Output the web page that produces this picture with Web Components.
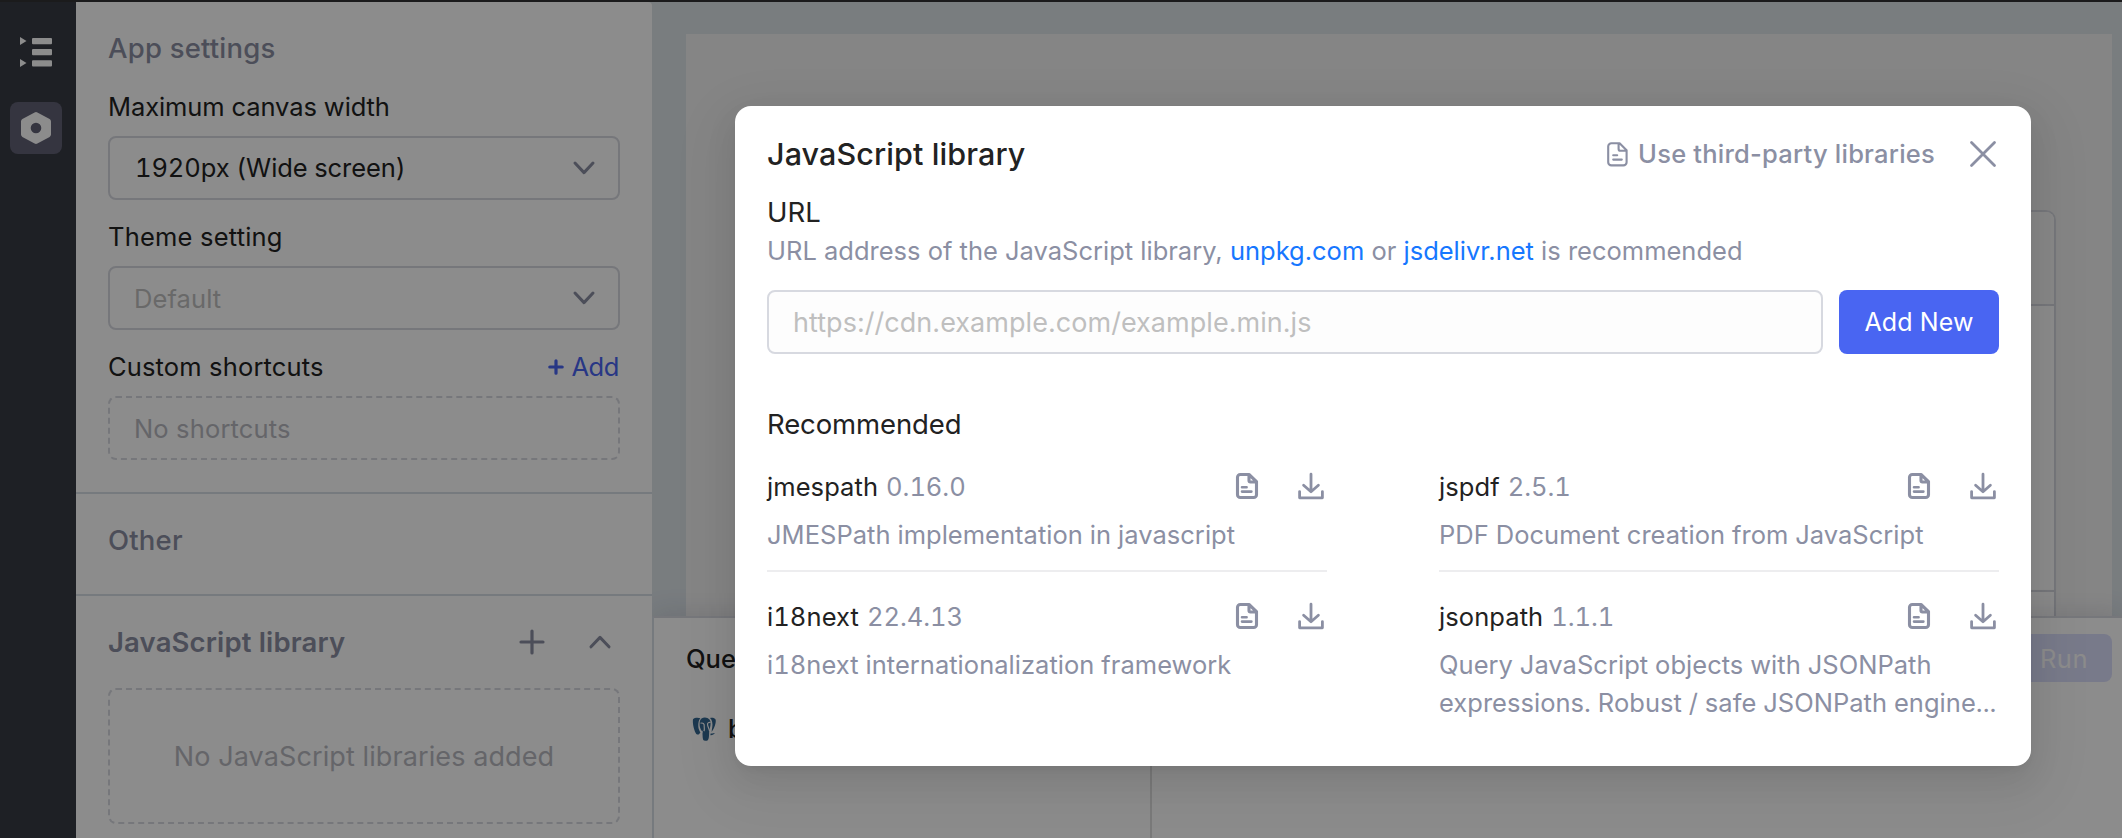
<!DOCTYPE html>
<html lang="en">
<head>
<meta charset="utf-8">
<title>App settings</title>
<style>
html,body{margin:0;height:100%;overflow:hidden}
body{font-family:Inter,"Liberation Sans",sans-serif;font-size:25.5px;color:#222;
--muted:#8b8fa3;--line:#d7d9e0;--blue:#4965f2}
</style>
</head>
<body>
<app-shell></app-shell>
<script>
const define=(name,html,setup)=>customElements.define(name,class extends HTMLElement{
  connectedCallback(){
    if(this.shadowRoot)return;
    const t=document.createElement('template');
    t.innerHTML=html;
    this.attachShadow({mode:'open'}).appendChild(t.content.cloneNode(true));
    if(setup)setup(this,this.shadowRoot);
  }
});

const icons={
  outline:[32,30,'<g fill="#fff"><path d="M0 0l6.500 4L0 8zM0 22l6.500 4L0 30z"/><rect x="12" y="1" width="20" height="6.200" rx="1"/><rect x="12" y="12" width="20" height="6.200" rx="1"/><rect x="12" y="23.200" width="20" height="6.200" rx="1"/></g>'],
  hexagon:[30,32,'<path fill="#fff" fill-rule="evenodd" d="M13.6.4a3 3 0 0 1 2.800 0l12.200 6.700A2.700 2.700 0 0 1 30 9.400v13.200a2.700 2.700 0 0 1-1.400 2.300l-12.200 6.700a3 3 0 0 1-2.800 0L1.400 24.900A2.700 2.700 0 0 1 0 22.600V9.400a2.700 2.700 0 0 1 1.400-2.300zM15 10.700a5.300 5.300 0 1 0 0 10.600 5.300 5.300 0 0 0 0-10.600z"/>'],
  down:[22,14,'<path d="M2 2l9 9.600L20 2" fill="none" stroke="currentColor" stroke-width="3" stroke-linecap="round" stroke-linejoin="round"/>'],
  up:[22,14,'<path d="M2 11.800l9-9.400 9 9.400" fill="none" stroke="currentColor" stroke-width="3" stroke-linecap="round" stroke-linejoin="round"/>'],
  plus:[26,26,'<path d="M13 2v22M2 13h22" stroke="currentColor" stroke-width="3.200" stroke-linecap="round"/>'],
  smallplus:[16,16,'<path d="M8 1.800v12.400M1.800 8h12.400" stroke="currentColor" stroke-width="3.200" stroke-linecap="round"/>'],
  close:[26,26,'<path d="M1.500 1.500l23 23M24.500 1.500l-23 23" stroke="currentColor" stroke-width="2.800" stroke-linecap="round"/>'],
  doclight:[21,25,'<g fill="none" stroke="currentColor" stroke-width="2.100" stroke-linejoin="round" stroke-linecap="round"><path d="M12.600 1.200H4.400a3.200 3.200 0 0 0-3.200 3.200v15.800a3.200 3.200 0 0 0 3.200 3.200h12a3.200 3.200 0 0 0 3.200-3.200V8.200zM11.600 1.400V7a1.800 1.800 0 0 0 1.800 1.800h6"/><path d="M6.200 13.200h4M6.200 17.600h8.600"/></g>'],
  doc:[22,26,'<g fill="none" stroke="currentColor" stroke-width="3.100" stroke-linejoin="round" stroke-linecap="round"><path d="M13 1.500H4.300a2.800 2.800 0 0 0-2.800 2.800v17.400a2.800 2.800 0 0 0 2.800 2.800h13.400a2.800 2.800 0 0 0 2.800-2.800V8.600zM13 2v5.600a1.400 1.400 0 0 0 1.400 1.400h5.600"/><path d="M6 14.200h4.600M6 18.600h9.400" stroke-width="2.600"/></g>'],
  download:[26,27,'<g fill="none" stroke="currentColor" stroke-width="2.800" stroke-linecap="round" stroke-linejoin="round"><path d="M13 1.200v17M5.600 12.200l7.400 6.600 7.400-6.600M1.600 18.600v6.200h22.800v-6.200"/></g>'],
  postgres:[24,24,'<g fill="#336791"><path d="M1 2.200C2.600.6 6.200.5 8.400 1.300 6.600 3.200 6.200 6 6.300 9.300c.1 2.700 1.200 4.700 2.100 6.400-.7 1.600-2.600 2.500-4.100 1.300C2.400 14.500.2 6 1 2.200z"/><path d="M9.500 1.500C12-.2 15.600.3 17.500 2.500c1.500 2.200 1.300 5.500.5 8.200-.5 2.200-.9 3.800-.9 5.800-.1 3-.2 5.600-1.300 6.700-1.300 1.100-4 .8-4.700-.8-.7-2-.3-5.200-.9-7.900C8.300 12.300 7.500 9.500 7.600 7c0-2.300.5-4.300 1.900-5.500z"/><path d="M18 1.100c2.100-.6 4.700-.2 5.600 1.500.8 3-1.200 9-4 12.400.2-3.100 1.500-6.700.5-10.200C19.700 3.200 19 2 18 1.100z"/><path d="M18.600 16.400c1.500.1 2.900.1 4.200-.3-.8 1.500-2.700 2.300-4.400 2.100z"/></g><path d="M8.500 6.300c2.300-.8 4 .2 3.700 2.500-.1 2 .7 3.500-.3 5.300M7.500 17c2 0 2.900-1.300 2.500-3.100M18.500 5.500c-2-.3-3.300.5-2.900 2.500.3 2 1.500 3.500 2 6.200" fill="none" stroke="#fff" stroke-width="1.200"/>']
};
define('ui-icon','<style>:host{display:block;flex:none;line-height:0}svg{display:block;overflow:visible}</style>',(el,root)=>{
  const [w,h,body]=icons[el.getAttribute('name')];
  root.innerHTML+=`<svg width="${w}" height="${h}" viewBox="0 0 ${w} ${h}">${body}</svg>`;
});

define('side-rail',`<style>
:host{display:flex;flex-direction:column;box-sizing:border-box;width:76px;padding-left:10px;flex:none;background:#383b44;align-items:flex-start}
.i{box-sizing:border-box;width:52px;height:52px;border-radius:8px;display:flex;align-items:center;justify-content:center}
.top{margin-top:24px;margin-bottom:24px}
.on{background:#626276}
</style><div class="i top"><ui-icon name="outline"></ui-icon></div><div class="i on"><ui-icon name="hexagon"></ui-icon></div>`);

define('panel-section',`<style>
:host{display:block;padding:28px 32px 0;border-bottom:2px solid #d7dfe5}
:host([last]){border-bottom:0}
header{display:flex;align-items:center;height:36px;line-height:36px;font-size:27.5px;font-weight:500;color:var(--muted);letter-spacing:.2px}
:host([strong]) header{font-weight:600;letter-spacing:.15px}
.t{flex:1}
</style><header><span class="t"><slot name="title"></slot></span><slot name="actions"></slot></header><slot></slot>`);

define('form-field',`<style>
:host{display:block;margin-bottom:17px}
:host([last]){margin-bottom:0}
.label{display:flex;justify-content:space-between;align-items:center;line-height:40px;height:40px;margin-bottom:9px;letter-spacing:var(--ls,0)}
</style><div class="label"><span><slot name="label"></slot></span><slot name="action"></slot></div><slot></slot>`);

define('select-box',`<style>
:host{box-sizing:border-box;height:64px;border:2px solid var(--line);border-radius:8px;display:flex;align-items:center;justify-content:space-between;padding:0 23px 0 25px;letter-spacing:-.1px;font-variant-numeric:tabular-nums}
:host(:not([placeholder])) span{padding-bottom:1px}
:host([placeholder]){color:#bfbfbf;padding-left:24px;letter-spacing:.1px}
ui-icon{color:var(--muted)}
</style><span><slot></slot></span><ui-icon name="down"></ui-icon>`);

define('empty-box',`<style>
:host{box-sizing:border-box;height:64px;border:2px dashed var(--line);border-radius:8px;display:flex;align-items:center;padding:0 24px;color:#b8b9bf;letter-spacing:.15px}
:host([large]){height:136px;justify-content:center;font-size:27px;letter-spacing:.1px}
</style><span><slot></slot></span>`);

define('settings-panel',`<style>
:host{display:block;box-sizing:border-box;width:576px;flex:none;background:#fff;border-radius:0 4px 0 0}
.fields{padding:21px 0 32px}
.add{display:flex;align-items:center;gap:7px;color:var(--blue);letter-spacing:-.4px;margin-right:1px}
.acts{display:flex;align-items:center;gap:44px;margin-right:9px}
.other{padding-bottom:36px}
.lib{padding-top:28px}
</style>
<panel-section><span slot="title">App settings</span><div class="fields">
<form-field style="--ls:-.1px"><span slot="label">Maximum canvas width</span><select-box>1920px (Wide screen)</select-box></form-field>
<form-field style="--ls:.2px"><span slot="label">Theme setting</span><select-box placeholder>Default</select-box></form-field>
<form-field last style="--ls:.15px"><span slot="label">Custom shortcuts</span><span slot="action" class="add"><ui-icon name="smallplus"></ui-icon>Add</span><empty-box>No shortcuts</empty-box></form-field>
</div></panel-section>
<panel-section><span slot="title">Other</span><div class="other"></div></panel-section>
<panel-section strong last><span slot="title">JavaScript library</span><span slot="actions" class="acts"><ui-icon name="plus"></ui-icon><ui-icon name="up"></ui-icon></span><div class="lib"><empty-box large>No JavaScript libraries added</empty-box></div></panel-section>`);

define('app-canvas',`<style>
:host{display:flex;height:614px;box-sizing:border-box;padding:32px 10px 0 34px;background:#dce3e8}
.page{flex:1;background:#f3f3f3;display:flex;padding:176px 56px 0}
.table{flex:1;border:2px solid var(--line);border-bottom:0;border-radius:10px 10px 0 0;background:#fff;display:flex;flex-direction:column}
.head{height:92px;border-bottom:2px solid var(--line);background:#f8f8f8;border-radius:8px 8px 0 0}
.body{flex:1;border-bottom:2px solid var(--line)}
.foot{height:24px}
</style><div class="page"><div class="table"><div class="head"></div><div class="body"></div><div class="foot"></div></div></div>`);

define('query-panel',`<style>
:host{display:flex;flex:1;background:#fff;border-top:2px solid var(--line);border-left:2px solid #d7dfe5;position:relative;box-shadow:0 -4px 24px rgba(40,40,70,.12);font-weight:500}
.list{box-sizing:border-box;width:498px;border-right:2px solid #dedede;padding:22px 32px}
h2{margin:0;font:inherit;line-height:38px}
.q{display:flex;align-items:center;gap:12px;height:52px;margin-top:25px;padding-left:6px}
.q span{padding-bottom:2px}
.main{flex:1;display:flex;justify-content:flex-end;align-items:flex-start;padding:16px 10px}
.run{height:48px;line-height:49px;border-radius:8px;background:#dbdefc;color:#fff;padding:0 24px;font-weight:400;letter-spacing:.5px}
</style><div class="list"><h2>Que</h2><div class="q"><ui-icon name="postgres"></ui-icon><span>b</span></div></div><div class="main"><div class="run">Run</div></div>`);

define('library-item',`<style>
:host{display:block;padding-bottom:16px;border-bottom:2px solid #ededef;font-variant-numeric:tabular-nums}
:host([end]){border:0;padding:26px 0 0}
.row{display:flex;align-items:center;height:38px;line-height:38px;letter-spacing:.08px}
.v{color:var(--muted);margin-left:8px;flex:1;letter-spacing:-.05px}
.ic{display:flex;gap:40px;align-items:center;color:var(--muted);margin-right:3px;padding-bottom:2px}
.d{margin-top:10px;line-height:38px;color:var(--muted);white-space:nowrap;letter-spacing:.03px}
</style><div class="row"><span><slot name="name"></slot></span><span class="v"><slot name="version"></slot></span><span class="ic"><ui-icon name="doc"></ui-icon><ui-icon name="download"></ui-icon></span></div><div class="d"><slot></slot></div>`);

define('library-modal',`<style>
:host{display:block;box-sizing:border-box;width:1296px;height:660px;background:#fff;border-radius:16px;padding:24px 32px;box-shadow:0 6px 12px -8px rgba(0,0,0,.12),0 12px 32px rgba(0,0,0,.08),0 18px 56px 16px rgba(0,0,0,.05)}
header{display:flex;align-items:center;height:48px}
h1{margin:0;flex:1;font-size:30.5px;font-weight:500;letter-spacing:.1px;line-height:48px}
.help{display:flex;align-items:center;gap:10px;color:var(--muted);font-weight:500;letter-spacing:.22px;margin-right:35px}
.help span{padding-bottom:2px}
.x{color:var(--muted);margin-right:3px}
.lab{font-size:27.5px;line-height:36px;margin-top:16px}
.desc{line-height:38px;margin-top:2px;color:var(--muted)}
.desc a{color:#1677ff;text-decoration:none}
.url{display:flex;gap:16px;margin-top:20px}
.in{box-sizing:border-box;flex:1;height:64px;line-height:62px;border:2px solid var(--line);border-radius:8px;background:#fdfdfd;padding:0 24px;font-size:27px;letter-spacing:.04px;color:#bfbfbf}
button{box-sizing:border-box;width:160px;height:64px;border:0;border-radius:8px;background:var(--blue);color:#fff;font:400 25px Inter,"Liberation Sans",sans-serif;letter-spacing:.1px;padding:0}
.rec{font-size:27.5px;line-height:36px;margin-top:52px;letter-spacing:-.12px}
.grid{display:grid;grid-template-columns:560px 560px;column-gap:112px;margin-top:26px}
</style>
<header><h1>JavaScript library</h1><span class="help"><ui-icon name="doclight"></ui-icon><span>Use third-party libraries</span></span><ui-icon class="x" name="close"></ui-icon></header>
<div class="lab">URL</div>
<div class="desc">URL address of the JavaScript library, <a>unpkg.com</a> or <a>jsdelivr.net</a> is recommended</div>
<div class="url"><div class="in">https://cdn.example.com/example.min.js</div><button>Add New</button></div>
<div class="rec">Recommended</div>
<div class="grid">
<library-item><span slot="name">jmespath</span><span slot="version">0.16.0</span>JMESPath implementation in javascript</library-item>
<library-item><span slot="name">jspdf</span><span slot="version">2.5.1</span>PDF Document creation from JavaScript</library-item>
<library-item end><span slot="name">i18next</span><span slot="version">22.4.13</span>i18next internationalization framework</library-item>
<library-item end><span slot="name">jsonpath</span><span slot="version">1.1.1</span>Query JavaScript objects with JSONPath<br>expressions. Robust / safe JSONPath engine...</library-item>
</div>`);

define('app-shell',`<style>
:host{display:flex;position:relative;box-sizing:border-box;width:2122px;height:838px;border-top:2px solid #1b1b1c;overflow:hidden;background:#dce3e8}
.work{flex:1;display:flex;flex-direction:column;min-width:0;overflow:hidden}
.mask{position:absolute;inset:0;background:rgba(0,0,0,.45);display:flex;align-items:flex-start;padding:104px 0 0 735px}
</style><side-rail></side-rail><settings-panel></settings-panel><div class="work"><app-canvas></app-canvas><query-panel></query-panel></div><div class="mask"><library-modal></library-modal></div>`);
</script>
</body>
</html>
